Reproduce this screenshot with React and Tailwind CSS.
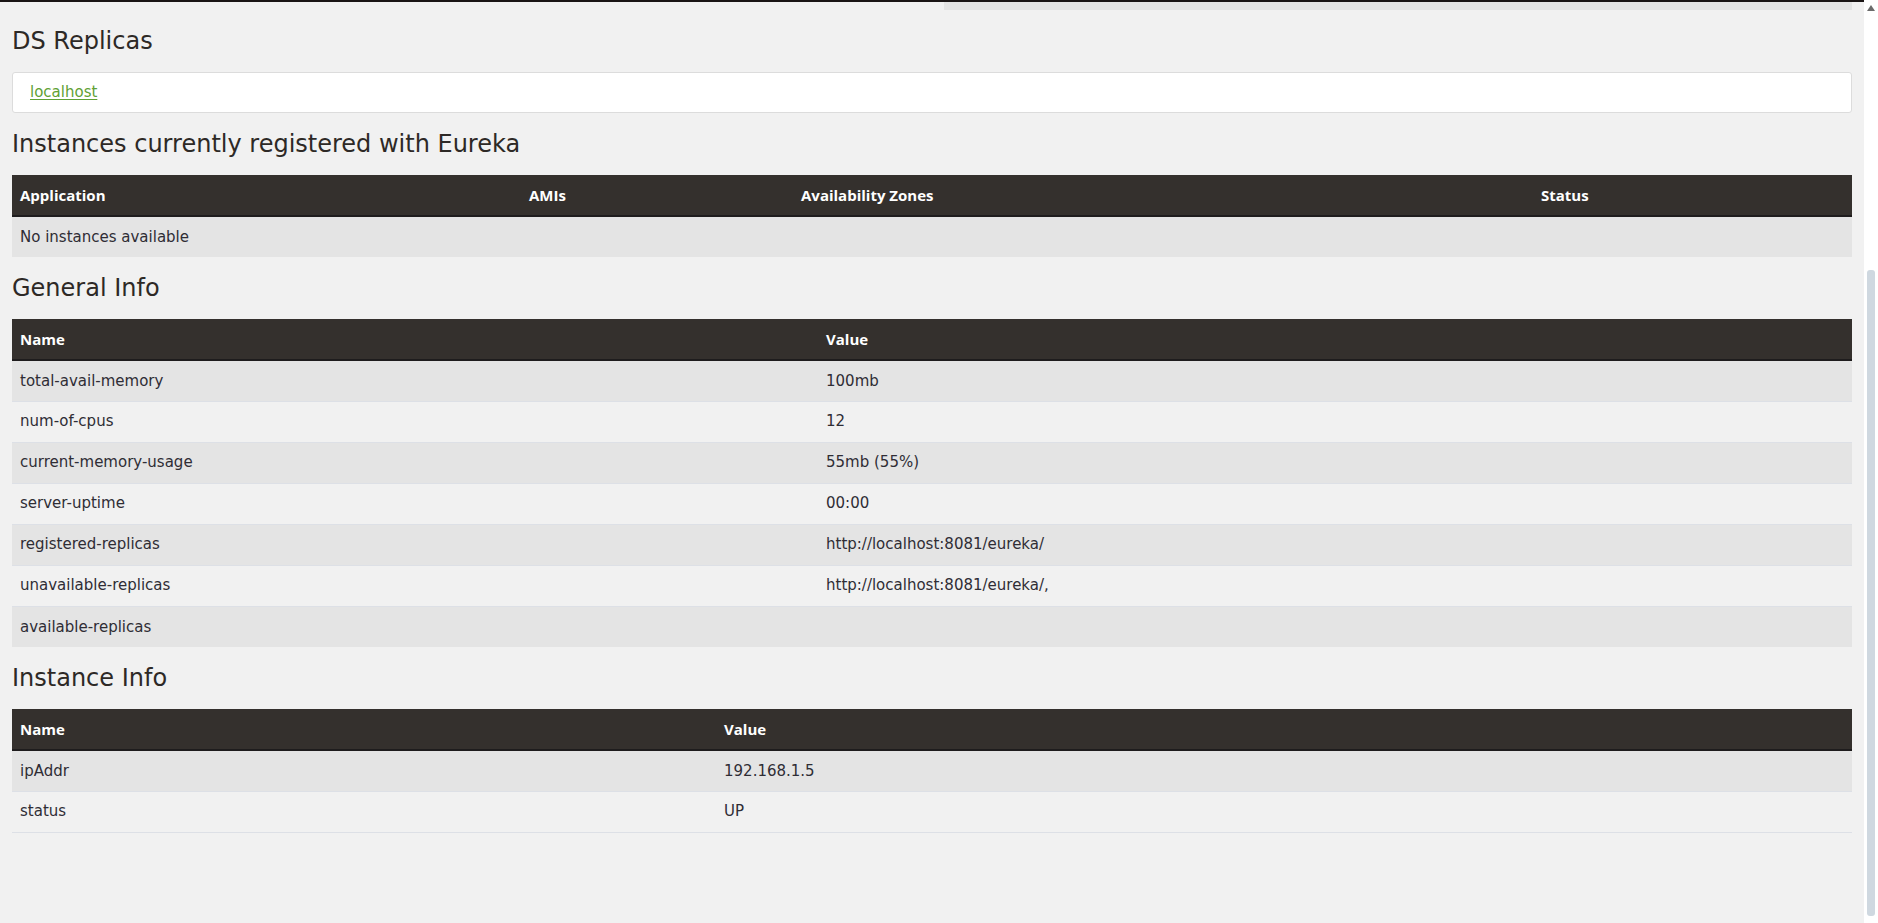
import React from "react";

const instancesCols = [
  { label: "Application", w: "w-[509px]" },
  { label: "AMIs", w: "w-[272px]" },
  { label: "Availability Zones", w: "w-[740px]" },
  { label: "Status", w: "w-[319px]" },
];

const generalCols = [
  { label: "Name", w: "w-[806px]" },
  { label: "Value", w: "w-[1034px]" },
];

const instanceInfoCols = [
  { label: "Name", w: "w-[704px]" },
  { label: "Value", w: "w-[1136px]" },
];

const generalRows = [
  ["total-avail-memory", "100mb"],
  ["num-of-cpus", "12"],
  ["current-memory-usage", "55mb (55%)"],
  ["server-uptime", "00:00"],
  ["registered-replicas", "http://localhost:8081/eureka/"],
  ["unavailable-replicas", "http://localhost:8081/eureka/,"],
  ["available-replicas", ""],
];

const instanceRows = [
  ["ipAddr", "192.168.1.5"],
  ["status", "UP"],
];

const Heading = ({ children }) => (
  <h2 className="h-[62px] flex items-center text-[24px] text-[#2d2926] font-['DejaVu_Sans',sans-serif]">
    {children}
  </h2>
);

const DataTable = ({ cols, rows, bottomBorder }) => (
  <table className={`w-full table-fixed border-collapse text-[15px] ${bottomBorder ? "border-b border-[#dde0e6]" : ""}`}>
    <thead>
      <tr className="bg-[#34302d]">
        {cols.map((c) => (
          <th
            key={c.label}
            className={`${c.w} h-[41px] px-2 text-left text-[15px] font-bold text-white border-b-2 border-[#1e1c1d] font-['Open_Sans',sans-serif]`}
          >
            {c.label}
          </th>
        ))}
      </tr>
    </thead>
    <tbody>
      {rows.map((r, i) => (
        <tr
          key={i}
          className={`${i % 2 === 0 ? "bg-[#e4e4e4]" : "bg-[#f1f1f1]"} ${i > 0 ? "border-t border-[#dde0e6]" : ""}`}
        >
          {r.map((cell, j) => (
            <td key={j} colSpan={r.length === 1 ? cols.length : 1} className="h-[41px] px-2 text-[#2f2d35]">
              {cell}
            </td>
          ))}
        </tr>
      ))}
    </tbody>
  </table>
);

export default function App() {
  return (
    <div className="flex h-[923px] w-full overflow-hidden bg-[#f1f1f1] font-['DejaVu_Sans',sans-serif]">
      {/* page */}
      <div className="w-[1864px] shrink-0">
        {/* leftover of the section above */}
        <div className="h-[2px] bg-[#1a1515]" />
        <div className="flex h-[8px]">
          <div className="flex-1" />
          <div className="w-[908px] bg-[#e4e4e4] mr-[12px]" />
        </div>

        <div className="px-[12px]">
          <Heading>DS Replicas</Heading>
          <div className="h-[41px] flex items-center px-[17px] bg-white border border-[#dcdcdc] rounded-[3px] text-[15px]">
            <a href="#" className="text-[#5fa134] underline underline-offset-2">localhost</a>
          </div>

          <Heading>Instances currently registered with Eureka</Heading>
          <DataTable cols={instancesCols} rows={[["No instances available"]]} />

          <Heading>General Info</Heading>
          <DataTable cols={generalCols} rows={generalRows} />

          <Heading>Instance Info</Heading>
          <DataTable cols={instanceInfoCols} rows={instanceRows} bottomBorder />
        </div>
      </div>

      {/* scrollbar */}
      <div className="w-[14px] bg-white flex flex-col items-center">
        <svg width="8" height="6" viewBox="0 0 8 6" className="mt-[5px]">
          <path d="M4 0 L8 6 L0 6 Z" fill="#6b6b6b" />
        </svg>
        <div className="mt-[259px] w-[8px] h-[646px] rounded-[3px] bg-[#cfd8e0]" />
      </div>
    </div>
  );
}
